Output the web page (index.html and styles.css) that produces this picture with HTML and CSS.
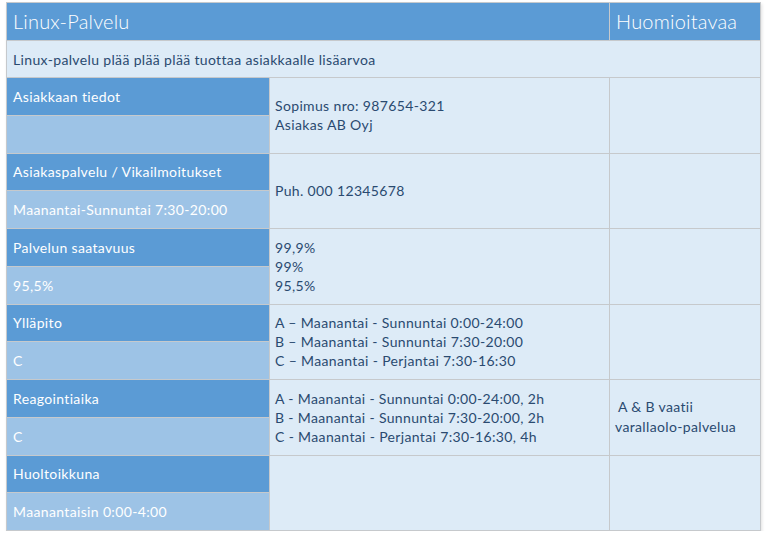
FILE: index.html
```html
<!DOCTYPE html>
<html lang="fi">
<head>
<meta charset="utf-8">
<title>Linux-Palvelu</title>
<link rel="stylesheet" href="styles.css">
</head>
<body>
<div class="sheet">
  <div class="cell head title"><span>Linux-Palvelu</span></div>
  <div class="cell head note-head"><span>Huomioitavaa</span></div>
  <div class="cell desc"><span>Linux-palvelu plää plää plää tuottaa asiakkaalle lisäarvoa</span></div>

  <div class="cell label"><span>Asiakkaan tiedot</span></div>
  <div class="cell value"><div>Sopimus nro: 987654-321<br>Asiakas AB Oyj</div></div>
  <div class="cell note"></div>
  <div class="cell sub"></div>

  <div class="cell label"><span>Asiakaspalvelu / Vikailmoitukset</span></div>
  <div class="cell value"><div>Puh. 000 12345678</div></div>
  <div class="cell note"></div>
  <div class="cell sub"><span>Maanantai-Sunnuntai 7:30-20:00</span></div>

  <div class="cell label"><span>Palvelun saatavuus</span></div>
  <div class="cell value"><div>99,9%<br>99%<br>95,5%</div></div>
  <div class="cell note"></div>
  <div class="cell sub"><span>95,5%</span></div>

  <div class="cell label"><span>Ylläpito</span></div>
  <div class="cell value"><div>A – Maanantai - Sunnuntai 0:00-24:00<br>B – Maanantai - Sunnuntai 7:30-20:00<br>C – Maanantai - Perjantai 7:30-16:30</div></div>
  <div class="cell note"></div>
  <div class="cell sub"><span>C</span></div>

  <div class="cell label"><span>Reagointiaika</span></div>
  <div class="cell value"><div>A - Maanantai - Sunnuntai 0:00-24:00, 2h<br>B - Maanantai - Sunnuntai 7:30-20:00, 2h<br>C - Maanantai - Perjantai 7:30-16:30, 4h</div></div>
  <div class="cell note"><div><span class="lead">A &amp; B vaatii</span><br>varallaolo-palvelua</div></div>
  <div class="cell sub"><span>C</span></div>

  <div class="cell label"><span>Huoltoikkuna</span></div>
  <div class="cell value"></div>
  <div class="cell note"></div>
  <div class="cell sub"><span>Maanantaisin 0:00-4:00</span></div>
</div>
</body>
</html>
```

FILE: styles.css
```css
html, body {
  margin: 0;
  padding: 0;
  background: #ffffff;
}

body {
  padding: 2px 0 0 6px;
  font-family: Lato, "Open Sans", sans-serif;
  font-size: 14px;
  letter-spacing: 0.35px;
  color: #2a4a70;
}

.sheet {
  box-sizing: border-box;
  width: 755px;
  height: 529px;
  display: grid;
  grid-template-columns: 262px 339px 150px;
  grid-template-rows: 37px 36px repeat(12, 1fr);
  gap: 1px;
  padding: 1px;
  background: #c6c9cc;
  box-shadow: 1px 2px 3px rgba(0, 0, 0, 0.12);
}

.cell {
  display: flex;
  align-items: center;
  min-width: 0;
  line-height: 19px;
  background: #ddebf7;
  white-space: nowrap;
}

.head {
  background: #5b9bd5;
  color: #ffffff;
  font-weight: 300;
  font-size: 20px;
  letter-spacing: 0.2px;
}

.title {
  grid-column: span 2;
  padding-left: 6px;
}

.note-head {
  padding-left: 6px;
}

.desc {
  grid-column: span 3;
  padding-left: 6px;
}

.label {
  background: #5b9bd5;
  color: #ffffff;
  padding-left: 6px;
}

.sub {
  background: #9dc3e6;
  color: #ffffff;
  padding-left: 6px;
}

.value {
  grid-row: span 2;
  padding-left: 5px;
}

.note {
  grid-row: span 2;
  padding-left: 5px;
  line-height: 20px;
}

.lead {
  padding-left: 3px;
}
```
